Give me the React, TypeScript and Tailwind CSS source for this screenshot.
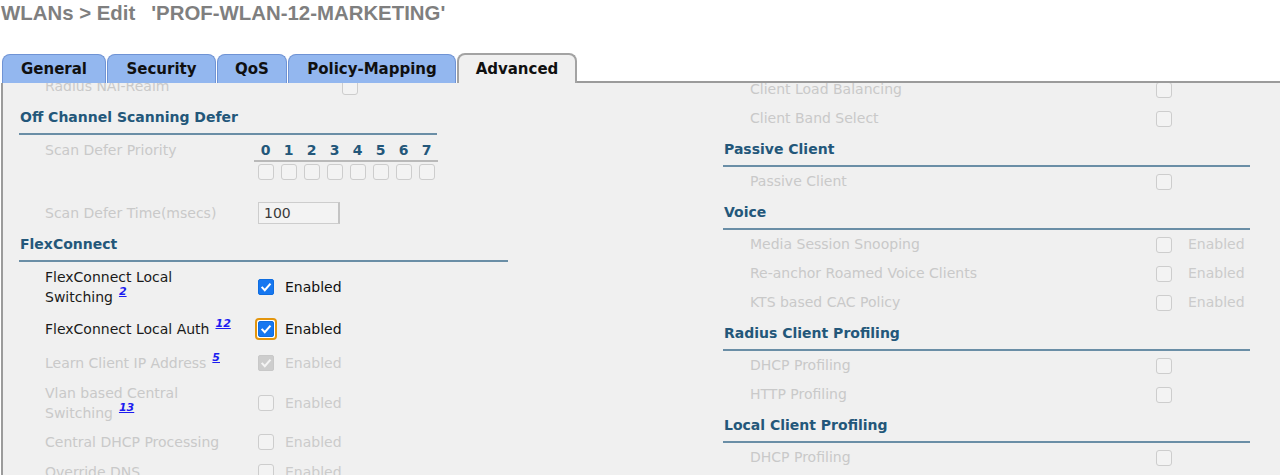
import React from "react";

type CbState = "off" | "on" | "dis-on" | "dis-off";

function CheckMark({ color }: { color: string }) {
  return (
    <svg width="15" height="15" viewBox="0 0 15 15" className="block">
      <path d="M3.6 7.6 L6.2 10.4 L11.6 4.2" stroke={color} strokeWidth="2.2" fill="none" strokeLinecap="square" />
    </svg>
  );
}

function Cb({ state, focus }: { state: CbState; focus?: boolean }) {
  let box: React.ReactNode;
  if (state === "on") {
    box = (
      <span className="block w-[16px] h-[16px] rounded-[2px] bg-[#1677f0] border border-[#0f6de0] flex items-center justify-center">
        <CheckMark color="#ffffff" />
      </span>
    );
  } else if (state === "dis-on") {
    box = (
      <span className="block w-[16px] h-[16px] rounded-[2px] bg-[#cdcdcd] border border-[#c8c8c8] flex items-center justify-center">
        <CheckMark color="#f4f4f4" />
      </span>
    );
  } else {
    box = (
      <span className="block w-[16px] h-[16px] rounded-[3px] bg-[#f3f3f3] border border-[#cdcdcd]" />
    );
  }
  if (focus) {
    return (
      <span className="block rounded-[4px] border-2 border-[#e3950d] bg-white p-[1px] -m-[3px]">{box}</span>
    );
  }
  return box;
}

function Sup({ n }: { n: string }) {
  return (
    <span className="relative -top-[7px] ml-[6px] text-[11px] font-bold italic underline text-[#1c1cf0] leading-none">
      {n}
    </span>
  );
}

function Heading({ text, w, pt = "pt-[8px]" }: { text: string; w: string; pt?: string }) {
  return (
    <div className={`${w} ${pt} pb-[8px] border-b-2 border-[#6a8ea6]`}>
      <div className="pl-[1px] leading-[16px] text-[14px] font-bold text-[#23577a]">{text}</div>
    </div>
  );
}

function RightRow({ label, enabled }: { label: string; enabled?: boolean }) {
  return (
    <div className="h-[29px] flex items-center">
      <div className="pl-[27px] w-[433px] text-[14px] text-[#c9c9c9] whitespace-nowrap">{label}</div>
      <Cb state="dis-off" />
      {enabled && <span className="ml-[16px] text-[14px] text-[#cbcbcb]">Enabled</span>}
    </div>
  );
}

function FlexRow({
  h,
  label,
  state,
  disabled,
  focus,
}: {
  h: string;
  label: React.ReactNode;
  state: CbState;
  disabled?: boolean;
  focus?: boolean;
}) {
  return (
    <div className={`${h} flex items-center`}>
      <div
        className={`ml-[26px] w-[209px] text-[14px] leading-[20px] ${
          disabled ? "text-[#c9c9c9]" : "text-[#1a1a1a]"
        }`}
      >
        {label}
      </div>
      <div className="w-[23px] flex justify-center">
        <Cb state={state} focus={focus} />
      </div>
      <span className={`ml-[8px] mt-[1px] text-[14px] ${disabled ? "text-[#cbcbcb]" : "text-[#111111]"}`}>Enabled</span>
    </div>
  );
}

export default function App() {
  const digits = ["0", "1", "2", "3", "4", "5", "6", "7"];
  return (
    <div className="w-[1280px] h-[475px] bg-white overflow-hidden font-['DejaVu_Sans',Verdana,sans-serif]">
      {/* Title */}
      <div className="h-[53px] pt-[2px] pl-[1px] font-['Liberation_Sans',Arial,sans-serif] font-bold text-[20.4px] leading-[23px] text-[#7f7f7f] whitespace-nowrap">
        WLANs &gt; Edit<span className="ml-[16px]">'PROF-WLAN-12-MARKETING'</span>
      </div>

      {/* Tabs */}
      <div className="flex items-end h-[30px] pl-[2px]">
        {[
          { t: "General", w: "w-[104px]" },
          { t: "Security", w: "w-[109px]" },
          { t: "QoS", w: "w-[70px]" },
          { t: "Policy-Mapping", w: "w-[168px]" },
        ].map((tab) => (
          <div
            key={tab.t}
            className={`${tab.w} mr-[1px] h-[29px] rounded-t-[8px] border border-b-0 border-[#6f93d4] bg-[#93b7ef] flex items-center justify-center text-[15px] font-bold text-[#101010]`}
          >
            <span className="mt-[1px]">{tab.t}</span>
          </div>
        ))}
        <div className="w-[120px] h-[30px] rounded-t-[8px] border-2 border-b-0 border-[#a3a3a3] bg-[#f0f0f0] flex items-center justify-center text-[15px] font-bold text-[#101010]">
          <span className="mt-[1px]">Advanced</span>
        </div>
        <div className="flex-1 h-[30px] border-b-2 border-[#9b9b9b]" />
      </div>

      {/* Content */}
      <div className="h-[392px] ml-[1px] border-l-2 border-[#9b9b9b] bg-[#f0f0f0] overflow-hidden flex pl-[16px]">
        {/* Left column */}
        <div className="w-[704px] -mt-[11px]">
          <div className="h-[29px] flex items-center">
            <div className="ml-[26px] w-[297px] text-[14px] text-[#c9c9c9]">Radius NAI-Realm</div>
            <Cb state="dis-off" />
          </div>

          <Heading text="Off Channel Scanning Defer" w="w-[418px]" />

          <div className="pt-[7px]">
            <div className="flex">
              <div className="ml-[26px] w-[209px] leading-[16px] text-[14px] text-[#c9c9c9]">Scan Defer Priority</div>
              <div>
                <div className="flex border-b-2 border-[#b9b9b9] pb-[2px]">
                  {digits.map((d) => (
                    <div key={d} className="w-[23px] text-center leading-[16px] text-[14px] font-bold text-[#23577a]">
                      {d}
                    </div>
                  ))}
                </div>
                <div className="flex mt-[2px]">
                  {digits.map((d) => (
                    <div key={d} className="w-[23px] flex justify-center">
                      <Cb state="dis-off" />
                    </div>
                  ))}
                </div>
              </div>
            </div>
          </div>

          <div className="mt-[22px] h-[22px] flex items-center">
            <div className="ml-[26px] w-[209px] text-[14px] text-[#c9c9c9]">Scan Defer Time(msecs)</div>
            <div className="ml-[4px] w-[82px] h-[22px] bg-[#f3f3f3] border border-[#cdcdcd] border-r-2 border-r-[#c4c4c4] flex items-center pl-[5px] text-[14px] text-[#3a3a3a]">
              100
            </div>
          </div>

          <Heading text="FlexConnect" w="w-[489px]" pt="pt-[12px]" />

          <FlexRow
            h="h-[50px]"
            state="on"
            label={
              <>
                FlexConnect Local
                <br />
                Switching
                <Sup n="2" />
              </>
            }
          />
          <FlexRow
            h="h-[34px]"
            state="on"
            focus
            label={
              <span className="whitespace-nowrap">
                FlexConnect Local Auth
                <Sup n="12" />
              </span>
            }
          />
          <FlexRow
            h="h-[34px]"
            state="dis-on"
            disabled
            label={
              <span className="whitespace-nowrap">
                Learn Client IP Address
                <Sup n="5" />
              </span>
            }
          />
          <FlexRow
            h="h-[46px]"
            state="dis-off"
            disabled
            label={
              <>
                Vlan based Central
                <br />
                Switching
                <Sup n="13" />
              </>
            }
          />
          <FlexRow h="h-[32px]" state="dis-off" disabled label="Central DHCP Processing" />
          <FlexRow h="h-[28px]" state="dis-off" disabled label="Override DNS" />
        </div>

        {/* Right column */}
        <div className="w-[527px] -mt-[8px]">
          <RightRow label="Client Load Balancing" />
          <RightRow label="Client Band Select" />
          <Heading text="Passive Client" w="w-[527px]" />
          <RightRow label="Passive Client" />
          <Heading text="Voice" w="w-[527px]" />
          <RightRow label="Media Session Snooping" enabled />
          <RightRow label="Re-anchor Roamed Voice Clients" enabled />
          <RightRow label="KTS based CAC Policy" enabled />
          <Heading text="Radius Client Profiling" w="w-[527px]" />
          <RightRow label="DHCP Profiling" />
          <RightRow label="HTTP Profiling" />
          <Heading text="Local Client Profiling" w="w-[527px]" />
          <RightRow label="DHCP Profiling" />
        </div>
      </div>
    </div>
  );
}
